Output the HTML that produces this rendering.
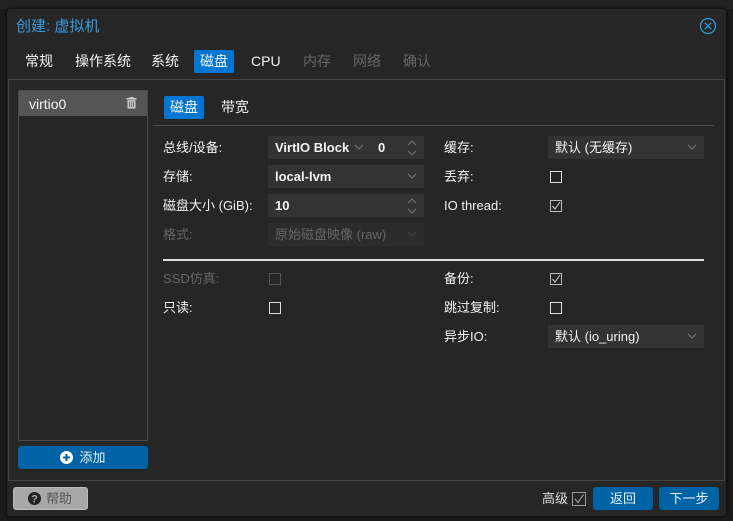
<!DOCTYPE html>
<html><head><meta charset="utf-8"><style>
*{box-sizing:border-box;margin:0;padding:0}
body{width:733px;height:521px;background:#1b1b1b;font-family:"Liberation Sans","Noto Sans CJK SC",sans-serif;font-size:13px;line-height:16px;color:#f2f2f2;position:relative;overflow:hidden}
.a{position:absolute;white-space:nowrap}
.dlg{left:7px;top:9px;width:719px;height:507px;background:#262626;border-radius:3px;box-shadow:0 0 4px #000}
.tab{top:50px;height:23px;line-height:23px;padding:0 7px;font-size:14px}
.lbl{font-size:13px;line-height:16px}
.fld{background:#333;height:23px;line-height:23px;padding-left:7px;font-size:13px;font-weight:bold}
.cb{width:12px;height:12px;border:1px solid #ddd}
.arr{position:absolute;right:7px;top:7px}
.spin{position:absolute;right:7px;top:4px}
.btn{background:#0063a5;border-radius:3px;color:#e8f0f8;text-align:center;height:23px;line-height:23px}
</style></head><body>
<div class="a" style="left:0;top:0;width:733px;height:9px;background:#222"></div>
<div class="a dlg"></div>
<div class="a" style="left:16px;top:18px;font-size:15px;line-height:18px;color:#3a9be0">创建: 虚拟机</div>
<svg class="a" style="left:699px;top:17px" width="18" height="18" viewBox="0 0 18 18"><circle cx="9" cy="9" r="7.5" fill="none" stroke="#2a9bd8" stroke-width="1.3"/><path d="M5.8 5.8L12.2 12.2M12.2 5.8L5.8 12.2" stroke="#2a9bd8" stroke-width="1.3"/></svg>
<div class="a tab" style="left:18px">常规</div>
<div class="a tab" style="left:68px">操作系统</div>
<div class="a tab" style="left:144px">系统</div>
<div class="a tab" style="left:194px;background:#0075d1;border-radius:2px;width:40px;padding:0;text-align:center">磁盘</div>
<div class="a tab" style="left:244px">CPU</div>
<div class="a tab" style="left:296px;color:#666">内存</div>
<div class="a tab" style="left:346px;color:#666">网络</div>
<div class="a tab" style="left:396px;color:#666">确认</div>
<div class="a" style="left:8px;top:79px;width:717px;height:402px;border:1px solid #454545"></div>
<div class="a" style="left:18px;top:90px;width:130px;height:351px;border:1px solid #4a4a4a"></div>
<div class="a" style="left:19px;top:91px;width:128px;height:25px;background:#555"></div>
<div class="a" style="left:29px;top:96px;font-size:14px">virtio0</div>
<svg class="a" style="left:126px;top:97px" width="11" height="12" viewBox="0 0 11 12"><rect x="0.5" y="1" width="10" height="1.6" fill="#ccc"/><rect x="3.5" y="0" width="4" height="1.5" fill="#ccc"/><path d="M1.5 3.2h8v8.3h-8z" fill="#ccc"/><path d="M3.5 4.5v5.5M5.5 4.5v5.5M7.5 4.5v5.5" stroke="#555" stroke-width="0.8"/></svg>
<div class="a btn" style="left:18px;top:446px;width:130px;display:flex;align-items:center;justify-content:center">
<svg width="13" height="13" style="margin-right:6px"><circle cx="6.5" cy="6.5" r="6.5" fill="#fff"/><path d="M6.5 3v7M3 6.5h7" stroke="#0063a5" stroke-width="2"/></svg>添加</div>
<div class="a" style="left:164px;top:96px;width:40px;height:23px;line-height:23px;background:#0075d1;border-radius:2px;text-align:center;font-size:14px">磁盘</div>
<div class="a" style="left:221px;top:96px;line-height:23px;font-size:14px">带宽</div>
<div class="a" style="left:153px;top:125px;width:561px;height:1px;background:#4a4a4a"></div>

<div class="a lbl" style="left:163px;top:140px">总线/设备:</div>
<div class="a fld" style="left:268px;top:136px;width:103px">VirtIO Block<svg class="arr" width="10" height="8"><path d="M1 2l4 4 4-4" fill="none" stroke="#777"/></svg></div>
<div class="a fld" style="left:371px;top:136px;width:53px">0<svg class="spin" width="10" height="16"><path d="M1 5l4-4 4 4M1 11l4 4 4-4" fill="none" stroke="#777"/></svg></div>
<div class="a lbl" style="left:163px;top:169px">存储:</div>
<div class="a fld" style="left:268px;top:165px;width:156px">local-lvm<svg class="arr" width="10" height="8"><path d="M1 2l4 4 4-4" fill="none" stroke="#777"/></svg></div>
<div class="a lbl" style="left:163px;top:198px">磁盘大小 (GiB):</div>
<div class="a fld" style="left:268px;top:194px;width:156px">10<svg class="spin" width="10" height="16"><path d="M1 5l4-4 4 4M1 11l4 4 4-4" fill="none" stroke="#777"/></svg></div>
<div class="a lbl" style="left:163px;top:227px;color:#666">格式:</div>
<div class="a fld" style="left:268px;top:223px;width:156px;background:#2c2c2c;color:#666;font-weight:normal">原始磁盘映像 (raw)<svg class="arr" width="10" height="8"><path d="M1 2l4 4 4-4" fill="none" stroke="#444"/></svg></div>

<div class="a lbl" style="left:444px;top:140px">缓存:</div>
<div class="a fld" style="left:548px;top:136px;width:156px;font-weight:normal">默认 (无缓存)<svg class="arr" width="10" height="8"><path d="M1 2l4 4 4-4" fill="none" stroke="#777"/></svg></div>
<div class="a lbl" style="left:444px;top:169px">丢弃:</div>
<div class="a cb" style="left:550px;top:171px"></div>
<div class="a lbl" style="left:444px;top:198px">IO thread:</div>
<div class="a cb" style="left:550px;top:200px;border-color:#bbb"><svg width="10" height="10" style="position:absolute;left:0;top:0"><path d="M1.5 5l2.5 3 5-7" fill="none" stroke="#ccc" stroke-width="1"/></svg></div>

<div class="a" style="left:163px;top:259px;width:541px;height:2px;background:#ddd"></div>

<div class="a lbl" style="left:163px;top:271px;color:#666">SSD仿真:</div>
<div class="a cb" style="left:269px;top:273px;border-color:#555"></div>
<div class="a lbl" style="left:163px;top:300px">只读:</div>
<div class="a cb" style="left:269px;top:302px"></div>
<div class="a lbl" style="left:444px;top:271px">备份:</div>
<div class="a cb" style="left:550px;top:273px;border-color:#bbb"><svg width="10" height="10" style="position:absolute;left:0;top:0"><path d="M1.5 5l2.5 3 5-7" fill="none" stroke="#ccc" stroke-width="1"/></svg></div>
<div class="a lbl" style="left:444px;top:300px">跳过复制:</div>
<div class="a cb" style="left:550px;top:302px"></div>
<div class="a lbl" style="left:444px;top:329px">异步IO:</div>
<div class="a fld" style="left:548px;top:325px;width:156px;font-weight:normal">默认 (io_uring)<svg class="arr" width="10" height="8"><path d="M1 2l4 4 4-4" fill="none" stroke="#777"/></svg></div>

<div class="a" style="left:13px;top:487px;width:75px;height:23px;background:#a8a8a8;border:1px solid #bbb;border-radius:3px;color:#555;display:flex;align-items:center;padding-left:14px">
<svg width="13" height="13" style="margin-right:5px"><circle cx="6.5" cy="6.5" r="6.5" fill="#222"/><text x="6.5" y="10.5" font-size="11" font-weight="bold" fill="#aaa" text-anchor="middle" font-family="Liberation Sans">?</text></svg>帮助</div>
<div class="a" style="left:542px;top:491px;color:#ddd;font-size:13px">高级</div>
<div class="a cb" style="left:572px;top:492px;width:14px;height:14px;border-color:#999"><svg width="12" height="12" style="position:absolute;left:0;top:0"><path d="M2 6l3 3.5 5.5-8" fill="none" stroke="#aaa" stroke-width="1"/></svg></div>
<div class="a btn" style="left:593px;top:487px;width:60px">返回</div>
<div class="a btn" style="left:659px;top:487px;width:60px">下一步</div>
</body></html>
